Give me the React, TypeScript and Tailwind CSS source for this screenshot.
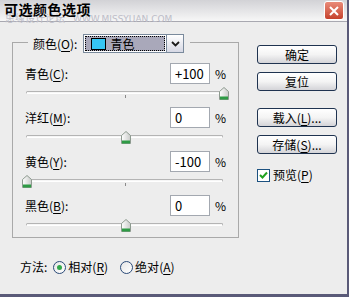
import React from "react";

const font = { fontFamily: '"Noto Sans CJK SC", "Noto Sans", sans-serif' };

type Row = { name: string; key: string; value: string; t: number };

const rows: Row[] = [
  { name: "青色", key: "C", value: "+100", t: 1 },
  { name: "洋红", key: "M", value: "0", t: 0.5 },
  { name: "黄色", key: "Y", value: "-100", t: 0 },
  { name: "黑色", key: "B", value: "0", t: 0.5 },
];

function Hotkey({ label, k, suffix = "" }: { label: string; k: string; suffix?: string }) {
  return (
    <span>
      {label}(<span className="underline underline-offset-2">{k}</span>){suffix}
    </span>
  );
}

function Thumb() {
  return (
    <svg width="10" height="13" viewBox="0 0 10 13">
      <defs>
        <linearGradient id="th" x1="0" y1="0" x2="1" y2="0">
          <stop offset="0" stopColor="#ffffff" />
          <stop offset="1" stopColor="#c9cbc9" />
        </linearGradient>
      </defs>
      <path d="M5 0.5 L9.5 4.5 L9.5 12.5 L0.5 12.5 L0.5 4.5 Z" fill="url(#th)" stroke="#8d9a8f" />
      <rect x="1" y="9.5" width="8" height="3" fill="#2e9b45" />
    </svg>
  );
}

function Slider({ t }: { t: number }) {
  return (
    <div className="relative h-[23px] ml-[13px] mr-[15px]">
      <div className="absolute left-0 right-0 top-[7px] h-[3px] rounded-full border border-[#b4b4b4] border-b-white bg-[#f6f6f6]" />
      <div className="absolute left-1/2 top-[11px] w-px h-[3px] bg-[#8a8a8a]" />
      <div className="absolute top-[3px]" style={{ left: `calc(${t * 100}% - 4px)` }}>
        <Thumb />
      </div>
    </div>
  );
}

function XpButton({ children, className = "" }: { children: React.ReactNode; className?: string }) {
  return (
    <div
      className={`h-[19px] w-[80px] rounded-[3px] border border-[#1f3350] bg-gradient-to-b from-white via-[#f4f4f4] to-[#d4d4d8] flex items-center justify-center text-[12px] text-black leading-none ${className}`}
    >
      {children}
    </div>
  );
}

function Radio({ on }: { on: boolean }) {
  return (
    <div className="w-[13px] h-[13px] rounded-full border border-[#2a4a78] bg-gradient-to-br from-[#e6e6e6] to-white flex items-center justify-center">
      {on && <div className="w-[5px] h-[5px] rounded-full bg-[#31a84a]" />}
    </div>
  );
}

export default function App() {
  return (
    <div
      className="w-[349px] h-[297px] bg-[#ededed] border-r-2 border-b-[3px] border-[#5a5a78] flex flex-col overflow-hidden text-[12px] text-black"
      style={font}
    >
      {/* title bar */}
      <div className="relative h-[22px] shrink-0 bg-gradient-to-b from-[#d2d2d6] to-[#f7f7f7] border-b border-[#a8a8b0]">
        <div className="absolute left-[5px] top-[13px] flex items-baseline gap-[8px] text-[#bdbdc8] leading-none">
          <span className="text-[10px]">思缘设计论坛</span>
          <span className="text-[9px]" style={{ fontFamily: '"DejaVu Sans", sans-serif' }}>WWW.MISSYUAN.COM</span>
        </div>
        <div className="absolute left-[4px] top-[0px] text-[14px] font-bold leading-[18px] tracking-[0.5px]">可选颜色选项</div>
        <div className="absolute right-[3px] top-[1px] w-[20px] h-[19px] rounded-[3px] border border-white bg-gradient-to-b from-[#e98a78] to-[#c5412c] flex items-center justify-center">
          <svg width="10" height="10" viewBox="0 0 10 10">
            <path d="M1 1 L9 9 M9 1 L1 9" stroke="white" strokeWidth="2" />
          </svg>
        </div>
      </div>

      <div className="flex flex-1">
        {/* left column */}
        <div className="pl-[12px] pt-[20px] w-[239px] shrink-0">
          <div className="relative h-[196px] border border-[#a9a9a9] pt-[20px]">
            {/* legend */}
            <div className="absolute left-[15px] top-[-9px] bg-[#ededed] pl-[5px] pr-[6px] flex items-center gap-[6px] h-[19px]">
              <Hotkey label="颜色" k="O" suffix=":" />
              <div className="flex h-[19px]">
                <div className="w-[84px] border border-[#7a8a9c] bg-white p-[1px]">
                  <div className="h-full bg-[#a9a8ba] border border-dotted border-black flex items-center pl-[5px] gap-[4px]">
                    <div className="w-[15px] h-[12px] bg-[#36c6f4] border border-black" />
                    <span className="text-[12px] leading-none">青色</span>
                  </div>
                </div>
                <div className="w-[17px] border border-[#7a8a9c] border-l-0 bg-gradient-to-b from-white to-[#d6d8e4] flex items-center justify-center">
                  <svg width="9" height="6" viewBox="0 0 9 6">
                    <path d="M1 1 L4.5 4.5 L8 1" stroke="#1a1a1a" strokeWidth="1.8" fill="none" />
                  </svg>
                </div>
              </div>
            </div>

            {rows.map((r) => (
              <div key={r.key}>
                <div className="flex items-center justify-between h-[21px] pl-[12px] pr-[12px]">
                  <Hotkey label={r.name} k={r.key} suffix=":" />
                  <div className="flex items-center">
                    <div className="w-[40px] h-[21px] bg-white border border-[#a3a8b0] flex items-center pl-[4px] text-[13px] leading-none">
                      {r.value}
                    </div>
                    <span className="ml-[5px] text-[12px]">%</span>
                  </div>
                </div>
                <Slider t={r.t} />
              </div>
            ))}
          </div>

          {/* method */}
          <div className="mt-[21px] pl-[8px] h-[16px] flex items-center">
            <span>方法:</span>
            <div className="ml-[6px]"><Radio on /></div>
            <span className="ml-[2px]"><Hotkey label="相对" k="R" /></span>
            <div className="ml-[12px]"><Radio on={false} /></div>
            <span className="ml-[2px]"><Hotkey label="绝对" k="A" /></span>
          </div>
        </div>

        {/* right column */}
        <div className="ml-[18px] pt-[23px] flex flex-col">
          <XpButton>确定</XpButton>
          <XpButton className="mt-[8px]">复位</XpButton>
          <XpButton className="mt-[17px]"><Hotkey label="载入" k="L" suffix="..." /></XpButton>
          <XpButton className="mt-[8px]"><Hotkey label="存储" k="S" suffix="..." /></XpButton>
          <div className="mt-[12px] flex items-center gap-[3px]">
            <div className="w-[13px] h-[13px] border border-[#1c5180] bg-white flex items-center justify-center">
              <svg width="9" height="8" viewBox="0 0 9 8">
                <path d="M1 4 L3.5 6.5 L8 1.5" stroke="#21a121" strokeWidth="2" fill="none" />
              </svg>
            </div>
            <Hotkey label="预览" k="P" />
          </div>
        </div>
      </div>
    </div>
  );
}
